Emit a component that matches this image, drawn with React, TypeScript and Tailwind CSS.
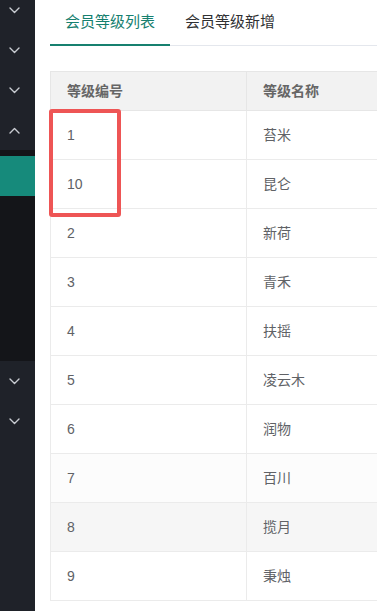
import React from 'react';

const levels = [
  { id: '1', name: '苔米' },
  { id: '10', name: '昆仑' },
  { id: '2', name: '新荷' },
  { id: '3', name: '青禾' },
  { id: '4', name: '扶摇' },
  { id: '5', name: '凌云木' },
  { id: '6', name: '润物' },
  { id: '7', name: '百川' },
  { id: '8', name: '揽月' },
  { id: '9', name: '秉烛' },
];

function Chevron({ up = false }: { up?: boolean }) {
  return (
    <svg width="11" height="7" viewBox="0 0 11 7" fill="none" className={up ? 'rotate-180' : ''}>
      <path d="M1 1l4.5 4.5L10 1" stroke="#c9ccd2" strokeWidth="1.4" strokeLinecap="round" strokeLinejoin="round" />
    </svg>
  );
}

function MenuItem({ up = false }: { up?: boolean }) {
  return (
    <div className="flex h-10 items-center pl-[9px]">
      <Chevron up={up} />
    </div>
  );
}

export default function App() {
  const rowBg = (id: string) => {
    if (id === '7') return 'bg-[#fcfcfc]';
    if (id === '8') return 'bg-[#f6f6f6]';
    return 'bg-white';
  };

  return (
    <div
      className="flex h-[611px] w-[377px] overflow-hidden bg-white text-[14px]"
      style={{ fontFamily: '"Liberation Sans", "Noto Sans CJK SC", sans-serif' }}
    >
      {/* Sidebar */}
      <aside className="flex w-[35px] shrink-0 flex-col bg-[#1f2229]">
        <div className="-mt-[10px]">
          <MenuItem />
          <MenuItem />
          <MenuItem />
          <MenuItem up />
        </div>
        <div className="flex h-[211px] flex-col bg-[#141519] pt-[6px]">
          <div className="h-10 bg-[#168a7b]" />
        </div>
        <MenuItem />
        <MenuItem />
      </aside>

      {/* Main */}
      <main className="min-w-0 flex-1 pl-[15px]">
        <div className="flex h-[46px] items-end border-b border-[#e4e7ed] text-[15px]">
          <div className="relative flex h-[46px] items-center px-[15px] text-[#16806f]">
            会员等级列表
            <span className="absolute bottom-[-1px] left-0 right-0 h-[2px] bg-[#16806f]" />
          </div>
          <div className="flex h-[46px] items-center px-[15px] text-[#303133]">会员等级新增</div>
        </div>

        <div className="relative mt-[25px] w-[520px]">
          <table className="w-full border-collapse text-[#606266]">
            <thead>
              <tr className="h-[39px] bg-[#f2f2f2] text-left text-[#666]">
                <th className="w-[196px] border border-[#e6e6e6] pl-4 font-bold">等级编号</th>
                <th className="border border-[#e6e6e6] pl-4 font-bold">等级名称</th>
              </tr>
            </thead>
            <tbody>
              {levels.map((l) => (
                <tr key={l.id} className={`h-[49px] ${rowBg(l.id)}`}>
                  <td className="border border-[#ebebeb] pl-4">{l.id}</td>
                  <td className="border border-[#ebebeb] pl-4">{l.name}</td>
                </tr>
              ))}
            </tbody>
          </table>
          <div className="absolute left-[-1px] top-[38px] h-[108px] w-[72px] rounded-[3px] border-4 border-[#ee5555]" />
        </div>
      </main>
    </div>
  );
}
